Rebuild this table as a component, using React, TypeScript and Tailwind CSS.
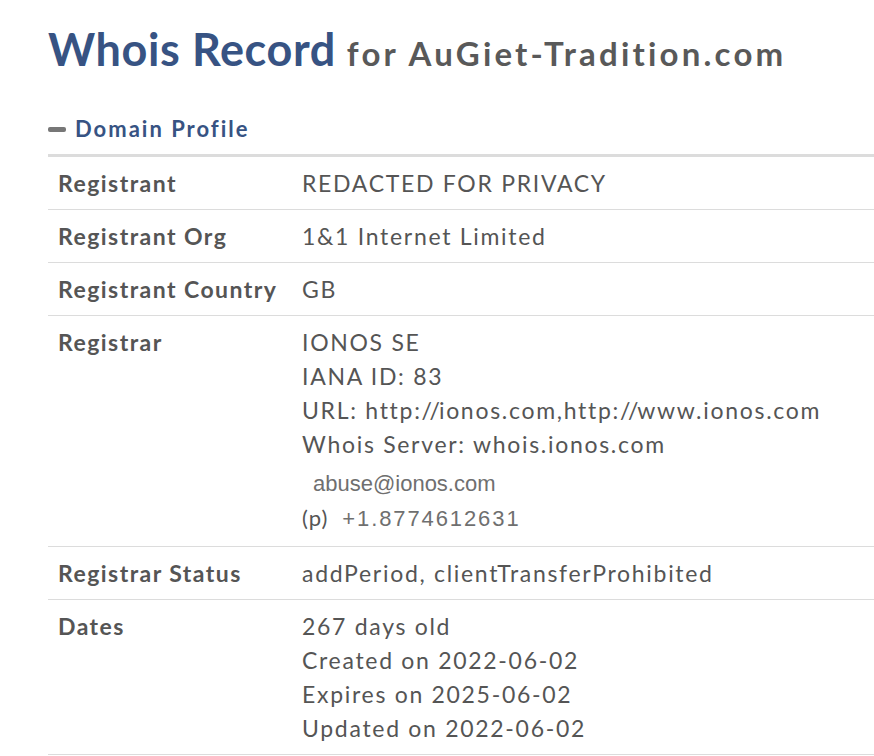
import React from "react";

const rows: { label: string; lines: React.ReactNode[] }[] = [
  { label: "Registrant", lines: ["REDACTED FOR PRIVACY"] },
  { label: "Registrant Org", lines: ["1&1 Internet Limited"] },
  { label: "Registrant Country", lines: ["GB"] },
];

function Row({ label, children }: { label: string; children: React.ReactNode }) {
  return (
    <div className="flex border-b border-[#dcdcdc] py-[9px]">
      <div className="w-[254px] shrink-0 whitespace-nowrap pl-[10px] font-bold tracking-[1.45px] text-[#555]">
        {label}
      </div>
      <div className="whitespace-nowrap tracking-[1.7px] text-[#555]">{children}</div>
    </div>
  );
}

const imgFont = { fontFamily: "'Liberation Sans', Arial, sans-serif" };

function Slashes() {
  return (
    <span>
      <span className="tracking-[-2.5px]">/</span>
      <span className="tracking-[-1px]">/</span>
    </span>
  );
}

export default function App() {
  return (
    <div
      className="min-h-screen overflow-hidden bg-white pl-[48px] pt-[23px] text-[23px] leading-[34px]"
      style={{ fontFamily: "Lato, 'Liberation Sans', sans-serif" }}
    >
      <h1 className="flex items-baseline whitespace-nowrap">
        <span className="text-[45px] font-bold leading-[52px] tracking-[0.6px] text-[#375383]">Whois Record</span>
        <span className="ml-[11px] text-[33px] font-bold tracking-[3.2px] text-[#595959]">for AuGiet-Tradition.com</span>
      </h1>

      <div className="mt-[39px] flex items-center gap-[9px] pb-[10px]">
        <span className="h-[5px] w-[18px] rounded-[2px] bg-[#777]" />
        <span className="text-[22px] font-bold leading-[30px] tracking-[2px] text-[#375383]">Domain Profile</span>
      </div>

      <div className="border-t-[3px] border-[#dcdcdc]">
        {rows.map((r) => (
          <Row key={r.label} label={r.label}>
            {r.lines}
          </Row>
        ))}
        <Row label="Registrar">
          <div>IONOS SE</div>
          <div>IANA ID: 83</div>
          <div>
            URL: http:<Slashes />ionos.com,http:<Slashes />www.ionos.com
          </div>
          <div>Whois Server: whois.ionos.com</div>
          <div className="mt-[6px] pl-[11px] text-[22px] tracking-normal text-[#6f6f6f]" style={imgFont}>
            abuse@ionos.com
          </div>
          <div className="flex items-baseline pb-[1px]">
            <span className="text-[22px] tracking-[1px]">(p)</span>
            <span className="ml-[14px] text-[22px] tracking-[1.9px] text-[#6f6f6f]" style={imgFont}>
              +1.8774612631
            </span>
          </div>
        </Row>
        <Row label="Registrar Status">addPeriod, clientTransferProhibited</Row>
        <Row label="Dates">
          <div>267 days old</div>
          <div>Created on 2022-06-02</div>
          <div>Expires on 2025-06-02</div>
          <div>Updated on 2022-06-02</div>
        </Row>
      </div>
    </div>
  );
}
